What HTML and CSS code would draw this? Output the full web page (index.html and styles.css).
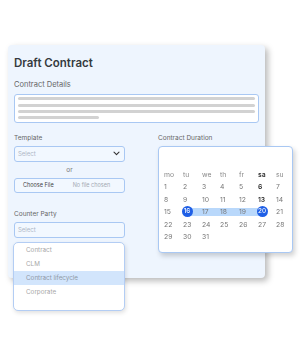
FILE: index.html
```html
<!DOCTYPE html>
<html>
<head>
<meta charset="utf-8">
<link rel="stylesheet" href="styles.css">
</head>
<body>
<div class="page">
  <div class="card">
    <h1 class="title">Draft Contract</h1>
    <div class="section-label">Contract Details</div>
    <div class="textarea">
      <div class="line"></div>
      <div class="line"></div>
      <div class="line"></div>
      <div class="line short"></div>
    </div>
    <div class="columns">
      <div class="left">
        <div class="label">Template</div>
        <div class="field select">
          <span class="placeholder">Select</span>
          <svg class="chev" width="7" height="5" viewBox="0 0 7 5"><path d="M1 1.2 L3.5 3.6 L6 1.2" fill="none" stroke="#333" stroke-width="1.1" stroke-linecap="round" stroke-linejoin="round"/></svg>
        </div>
        <div class="or">or</div>
        <div class="field file">
          <span class="file-btn">Choose File</span>
          <span class="file-none">No file chosen</span>
        </div>
        <div class="label party">Counter Party</div>
        <div class="dd-wrap">
          <div class="field select">
            <span class="placeholder">Select</span>
          </div>
          <div class="dropdown">
            <div class="item">Contract</div>
            <div class="item">CLM</div>
            <div class="item active">Contract lifecycle</div>
            <div class="item">Corporate</div>
          </div>
        </div>
      </div>
      <div class="right">
        <div class="label">Contract Duration</div>
        <div class="calendar">
          <div class="grid">
            <span class="dow">mo</span><span class="dow">tu</span><span class="dow">we</span><span class="dow">th</span><span class="dow">fr</span><span class="dow strong">sa</span><span class="dow">su</span>
            <span>1</span><span>2</span><span>3</span><span>4</span><span>5</span><span class="strong">6</span><span>7</span>
            <span>8</span><span>9</span><span>10</span><span>11</span><span>12</span><span class="strong">13</span><span>14</span>
            <div class="band"></div>
            <span class="r3 c1">15</span><span class="r3 c2"><b class="sel">16</b></span><span class="r3 c3">17</span><span class="r3 c4">18</span><span class="r3 c5">19</span><span class="r3 c6"><b class="sel">20</b></span><span class="r3 c7">21</span>
            <span>22</span><span>23</span><span>24</span><span>25</span><span>26</span><span>27</span><span>28</span>
            <span>29</span><span>30</span><span>31</span>
          </div>
        </div>
      </div>
    </div>
  </div>
</div>
</body>
</html>
```
FILE: styles.css
```css
* { box-sizing: border-box; }
html, body { margin: 0; padding: 0; background: #ffffff; }
body {
  font-family: Inter, "Noto Sans", sans-serif; color: #555;
  -webkit-font-smoothing: antialiased;
}
.page { padding: 45px 0 0 8px; width: 300px; height: 354px; overflow: hidden; }
.card {
  width: 257px; height: 233px;
  background: #eef5fe;
  border-radius: 4px;
  box-shadow: 3px 3px 6px rgba(0,0,0,0.28);
  padding: 10.5px 6px 0 6px;
}
.title {
  margin: 0;
  font-size: 11.5px; line-height: 14px; font-weight: 600;
  color: #353a40;
}
.section-label {
  margin-top: 10.8px;
  font-size: 7.5px; line-height: 9px; color: #666;
}
.textarea {
  margin-top: 4.7px;
  height: 29px;
  background: #ffffff;
  border: 1px solid #a9c8f3;
  border-radius: 3px;
  padding: 2.5px 3px 0 3px;
  display: flex; flex-direction: column; gap: 3.3px;
}
.line { height: 3px; border-radius: 1.5px; background: #d2d2d2; }
.line.short { width: 81px; }
.columns { display: flex; gap: 32px; margin-top: 11px; }
.left { width: 111px; flex: none; }
.right { width: 135px; margin-left: 1px; flex: none; }
.label { font-size: 6.5px; line-height: 8px; color: #666; white-space: nowrap; }
.field {
  height: 16px;
  border: 1px solid #a9c8f3;
  border-radius: 3px;
  background: #f2f8ff;
  display: flex; align-items: center;
  padding: 0 3px;
  margin-top: 4px;
  white-space: nowrap;
}
.placeholder { font-size: 6px; color: #aeb7c6; }
.select { justify-content: space-between; }
.chev { margin-right: 1px; }
.or { margin-top: 4px; font-size: 6.5px; line-height: 8px; text-align: center; color: #777; }
.file { height: 15px; padding-left: 8px; }
.file-btn { font-size: 5.5px; color: #444; }
.file-none { font-size: 5.5px; color: #a3a9b3; margin-left: 19px; }
.party { margin-top: 16.6px; }
.dd-wrap { position: relative; }
.dropdown {
  position: absolute; left: -1px; top: 20px;
  width: 112px; height: 69px;
  background: #ffffff;
  border: 1px solid #b3cdf4;
  border-radius: 5px;
  box-shadow: 1px 2px 4px rgba(0,0,0,0.12);
  overflow: hidden;
}
.item { height: 14px; line-height: 14px; padding-left: 12px; font-size: 6.3px; color: #a7a7a7; }
.item.active { background: #d2e5fc; color: #8f98a5; }
.calendar {
  margin-top: 4px;
  width: 135px; height: 107px;
  background: #ffffff;
  border: 1px solid #a9c8f3;
  border-radius: 4px;
  box-shadow: 2px 3px 5px rgba(0,0,0,0.18);
  padding: 20.75px 0 0 5px;
}
.grid {
  display: grid;
  grid-template-columns: 19px 19px 18px 19px 19px 18px 19px;
  grid-auto-rows: 12.5px;
  align-items: center;
  font-size: 6.8px; color: #777;
  will-change: transform;
}
.grid span { white-space: nowrap; }
.dow { color: #8a8a8a; }
.strong { color: #333; font-weight: 600; }
.band {
  grid-row: 4; grid-column: 2 / 7;
  height: 8px;
  margin-left: 3.5px; margin-right: 14px;
  background: #b9d8fb;
}
.r3 { grid-row: 4; }
.c1 { grid-column: 1; } .c2 { grid-column: 2; } .c3 { grid-column: 3; } .c4 { grid-column: 4; }
.c5 { grid-column: 5; } .c6 { grid-column: 6; } .c7 { grid-column: 7; }
.sel {
  display: inline-block;
  width: 11px; height: 11px; line-height: 11px;
  margin-left: -1.5px;
  border-radius: 50%;
  background: #1f5fe6; color: #fff;
  text-align: center; font-weight: 500;
  font-size: 6.3px;
}
```
